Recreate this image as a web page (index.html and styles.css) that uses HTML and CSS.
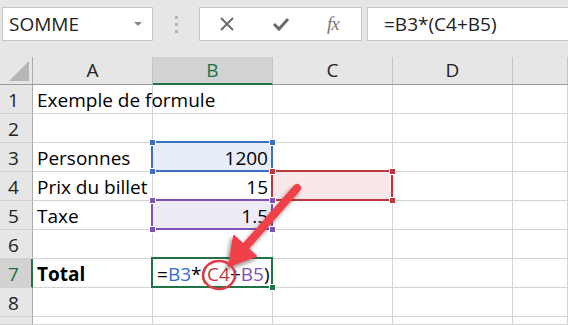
FILE: index.html
```html
<!DOCTYPE html>
<html lang="fr">
<head>
  <meta charset="UTF-8">
  <title>Exemple de formule</title>
  <link rel="stylesheet" href="styles.css">
</head>
<body>
  <div class="toolbar">
    <div class="namebox">
      <span>SOMME</span>
      <span class="caret"></span>
    </div>
    <div class="grip"><i></i><i></i><i></i></div>
    <div class="buttons">
      <svg class="ico" width="16" height="16" viewBox="0 0 16 16"><path d="M2 2 L14 14 M14 2 L2 14" stroke="#6b6b6b" stroke-width="2" fill="none"/></svg>
      <svg class="ico" width="18" height="16" viewBox="0 0 18 16"><path d="M2 8 L7 13 L16 3" stroke="#6b6b6b" stroke-width="3" fill="none"/></svg>
      <span class="fx">fx</span>
    </div>
    <div class="formula">=B3*(C4+B5)</div>
  </div>

  <div class="sheet">
    <div class="grid">
      <div class="corner"><span class="tri"></span></div>
      <div class="colhead">A</div>
      <div class="colhead sel">B</div>
      <div class="colhead">C</div>
      <div class="colhead">D</div>
      <div class="colhead"></div>

      <div class="rowhead">1</div>
      <div class="cell">Exemple de formule</div>
      <div class="cell"></div><div class="cell"></div><div class="cell"></div><div class="cell"></div>

      <div class="rowhead">2</div>
      <div class="cell"></div><div class="cell"></div><div class="cell"></div><div class="cell"></div><div class="cell"></div>

      <div class="rowhead">3</div>
      <div class="cell">Personnes</div>
      <div class="cell num ref blue">1200<i class="h tl"></i><i class="h tr"></i><i class="h bl"></i><i class="h br"></i></div>
      <div class="cell"></div><div class="cell"></div><div class="cell"></div>

      <div class="rowhead">4</div>
      <div class="cell">Prix du billet</div>
      <div class="cell num">15</div>
      <div class="cell ref red"><i class="h tl"></i><i class="h tr"></i><i class="h bl"></i><i class="h br"></i></div>
      <div class="cell"></div><div class="cell"></div>

      <div class="rowhead">5</div>
      <div class="cell">Taxe</div>
      <div class="cell num ref purple">1.5<i class="h tl"></i><i class="h tr"></i><i class="h bl"></i><i class="h br"></i></div>
      <div class="cell"></div><div class="cell"></div><div class="cell"></div>

      <div class="rowhead">6</div>
      <div class="cell"></div><div class="cell"></div><div class="cell"></div><div class="cell"></div><div class="cell"></div>

      <div class="rowhead sel">7</div>
      <div class="cell"><b>Total</b></div>
      <div class="cell active">=<span class="c-blue">B3</span>*(<span class="c-red">C4</span>+<span class="c-purple">B5</span>)<i class="fill"></i></div>
      <div class="cell"></div><div class="cell"></div><div class="cell"></div>

      <div class="rowhead">8</div>
      <div class="cell"></div><div class="cell"></div><div class="cell"></div><div class="cell"></div><div class="cell"></div>

      <div class="rowhead"></div>
      <div class="cell"></div><div class="cell"></div><div class="cell"></div><div class="cell"></div><div class="cell"></div>
    </div>

    <!-- annotation drawn over the sheet -->
    <svg class="callout" width="568" height="268" viewBox="0 57 568 268">
      <defs>
        <filter id="shadow" x="-30%" y="-30%" width="160%" height="160%">
          <feDropShadow dx="-2" dy="3" stdDeviation="2" flood-color="#000" flood-opacity="0.45"/>
        </filter>
      </defs>
      <g filter="url(#shadow)">
        <line x1="297" y1="188" x2="247" y2="245" stroke="#f0404a" stroke-width="8" stroke-linecap="round"/>
        <path d="M229 266 L234 236 L256 256 Z" fill="#f0404a" stroke="#f0404a" stroke-width="2" stroke-linejoin="round"/>
      </g>
      <ellipse cx="219" cy="275" rx="16" ry="14" fill="none" stroke="#e53a44" stroke-width="2.5"/>
    </svg>
  </div>
</body>
</html>
```

FILE: styles.css
```css
body {
  margin: 0;
  background: #e6e6e6;
  font-family: "Open Sans", Lato, sans-serif;
  color: #000;
  width: 568px;
  height: 325px;
  overflow: hidden;
  display: flex;
  flex-direction: column;
}
.toolbar {
  height: 57px;
  flex: none;
  display: flex;
  align-items: flex-start;
  padding-top: 7px;
  box-sizing: border-box;
}
.namebox, .buttons, .formula {
  height: 34px;
  background: #fff;
  border: 1px solid #c6c6c6;
  box-sizing: border-box;
  display: flex;
  align-items: center;
}
.namebox {
  margin-left: 2px;
  width: 151px;
  padding: 0 10px 0 6px;
  justify-content: space-between;
  font-size: 19px;
  color: #222;
}
.caret {
  width: 0;
  height: 0;
  border-left: 4px solid transparent;
  border-right: 4px solid transparent;
  border-top: 4px solid #888;
}
.grip {
  width: 46px;
  height: 34px;
  display: flex;
  flex-direction: column;
  align-items: center;
  justify-content: center;
  gap: 4px;
}
.grip i {
  width: 3px;
  height: 3px;
  background: #b4b4b4;
}
.buttons {
  width: 163px;
  padding: 0 0 0 19px;
  gap: 37px;
}
.fx {
  font-family: "Liberation Serif", serif;
  font-style: italic;
  font-size: 19px;
  color: #777;
  letter-spacing: -1px;
}
.formula {
  margin-left: 5px;
  flex: 1;
  border-right: none;
  padding-left: 16px;
  font-size: 19px;
  color: #222;
}

.sheet {
  position: relative;
  flex: 1;
  min-height: 0;
  background: #fff;
  overflow: hidden;
}
.grid {
  height: 100%;
  display: grid;
  grid-template-columns: 33px 120px 120px 120px 120px 1fr;
  grid-template-rows: 28px repeat(8, 29px) 1fr;
}
.grid > div {
  box-sizing: border-box;
  border-right: 1px solid #d4d4d4;
  border-bottom: 1px solid #d4d4d4;
  font-size: 19px;
  line-height: 1;
  display: flex;
  align-items: flex-end;
  padding: 0 4px 3px 4px;
  white-space: nowrap;
  min-height: 0;
}
.corner, .colhead, .rowhead {
  background: #e6e6e6;
  color: #222;
}
.corner {
  position: relative;
  border-right-color: #ababab !important;
  border-bottom-color: #9b9b9b !important;
}
.tri {
  position: absolute;
  right: 3px;
  bottom: 3px;
  width: 0;
  height: 0;
  border-left: 20px solid transparent;
  border-bottom: 20px solid #b6b6b6;
}
.colhead {
  justify-content: center;
  align-items: center !important;
  padding: 0 !important;
  border-right-color: #c4c4c4 !important;
  border-bottom-color: #9b9b9b !important;
}
.colhead.sel {
  background: #d2d2d2;
  color: #217346;
  border-bottom: 2px solid #217346 !important;
}
.rowhead {
  justify-content: flex-start;
  padding-left: 8px !important;
  border-right-color: #ababab !important;
  border-bottom-color: #d0d0d0 !important;
}
.rowhead.sel {
  background: #d2d2d2;
  color: #217346;
  border-right: 2px solid #217346 !important;
}
.cell {
  position: relative;
}
.cell.num {
  justify-content: flex-end;
}

.ref::after {
  content: "";
  position: absolute;
  left: -2px;
  top: -2px;
  right: -1px;
  bottom: -1px;
  border: 2px solid;
  pointer-events: none;
}
.blue { background: #e8eef8; }
.blue::after { border-color: #3d6fc4; }
.blue .h { background-color: #3d6fc4; }
.red { background: #f8e7e8; }
.red::after { border-color: #c0363e; }
.red .h { background-color: #c0363e; }
.purple { background: #efebf6; }
.purple::after { border-color: #7d52b6; }
.purple .h { background-color: #7d52b6; }
.h {
  position: absolute;
  width: 5px;
  height: 5px;
  border: 1px solid #fff;
  z-index: 2;
}
.h.tl { left: -4px; top: -4px; }
.h.tr { right: -4px; top: -4px; }
.h.bl { left: -4px; bottom: -4px; }
.h.br { right: -4px; bottom: -4px; }

.active::after {
  content: "";
  position: absolute;
  left: -2px;
  top: -2px;
  right: -1px;
  bottom: -1px;
  border: 2px solid #217346;
}
.fill {
  position: absolute;
  right: -4px;
  bottom: -4px;
  width: 5px;
  height: 5px;
  background: #217346;
  border: 1px solid #fff;
  z-index: 2;
}
.c-blue { color: #2f6fd0; }
.c-red { color: #c0363e; }
.c-purple { color: #7d52b6; }

.callout {
  position: absolute;
  left: 0;
  top: 0;
  pointer-events: none;
}
```
